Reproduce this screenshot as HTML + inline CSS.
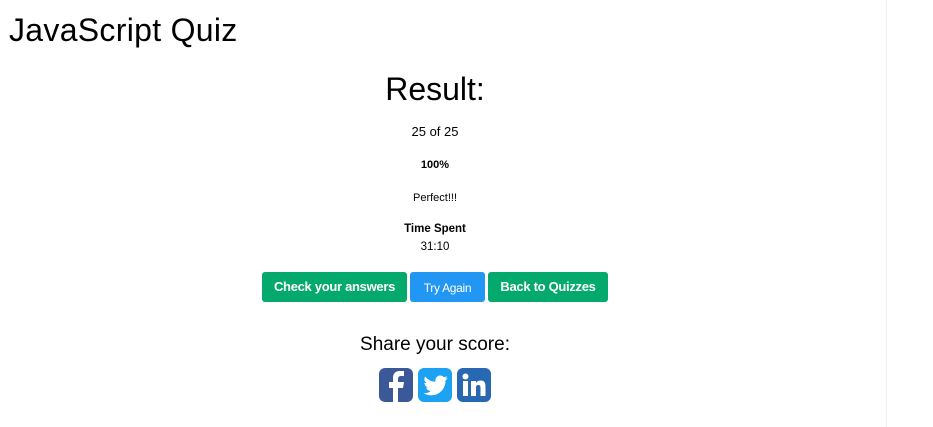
<!DOCTYPE html>
<html><head><style>
body{margin:0;width:933px;height:427px;background:#fff;font-family:"Segoe UI","Liberation Sans",sans-serif;color:#000;position:relative;overflow:hidden}
.abs{position:absolute;white-space:nowrap}
.c{left:0;width:870px;text-align:center}
.btn{position:absolute;top:272px;height:30px;border-radius:3px;color:#fff;font-size:13px;line-height:30px;text-align:center;letter-spacing:-0.3px}
.g{background:#04a96d;font-weight:bold}
.b{background:#2196f3;font-size:12px;line-height:32px}
.ic{position:absolute;top:368px;width:34px;height:34px;border-radius:6px}
</style></head><body>
<div style="position:absolute;left:886px;top:0;width:1px;height:427px;background:#eee"></div>
<div class="abs" style="left:9px;top:12px;font-size:32px;letter-spacing:0.3px">JavaScript Quiz</div>
<div class="abs c" style="top:71px;font-size:32px">Result:</div>
<div class="abs c" style="top:124px;font-size:13px">25 of 25</div>
<div class="abs c" style="top:159px;font-size:11px;font-weight:bold">100%</div>
<div class="abs c" style="top:192px;font-size:11px">Perfect!!!</div>
<div class="abs c" style="top:223px;font-size:11.5px;font-weight:bold">Time Spent</div>
<div class="abs c" style="top:241px;font-size:11.5px">31:10</div>
<div class="btn g" style="left:262px;width:145px">Check your answers</div>
<div class="btn b" style="left:410px;width:75px">Try Again</div>
<div class="btn g" style="left:488px;width:120px">Back to Quizzes</div>
<div class="abs c" style="top:334px;font-size:19px">Share your score:</div>
<div class="ic" style="left:379px;background:#3b5998"><svg width="34" height="34"><path d="M19 34V20h5l1-6h-6v-3c0-2 1-3 3-3h3V3h-4c-5 0-7 3-7 7v4h-4v6h4v14z" fill="#fff"/></svg></div>
<div class="ic" style="left:418px;background:#1da1f2"><svg width="34" height="34" viewBox="0 0 24 24"><path d="M21 7c-.6.3-1.3.5-2 .6.7-.4 1.3-1.1 1.5-1.9-.7.4-1.4.7-2.2.8A3.5 3.5 0 0 0 12.3 9.7 10 10 0 0 1 5 6a3.5 3.5 0 0 0 1.1 4.7c-.6 0-1.1-.2-1.6-.4 0 1.7 1.2 3.1 2.8 3.4-.5.2-1.1.2-1.6.1.4 1.4 1.8 2.4 3.300 2.4A7 7 0 0 1 4 17.7 10 10 0 0 0 19.4 9.200V8.800C20 8.300 20.600 7.700 21 7z" fill="#fff"/></svg></div>
<div class="ic" style="left:457px;background:#2867b2"><svg width="34" height="34"><rect x="6" y="13" width="5" height="15" fill="#fff"/><circle cx="8.5" cy="8.5" r="3" fill="#fff"/><path d="M14 13h5v2c1-2 3-2.5 5-2.5 3 0 4.500 2 4.500 6V28h-5v-8c0-2-.5-3-2.200-3S19 18 19 20v8h-5z" fill="#fff"/></svg></div>
</body></html>
